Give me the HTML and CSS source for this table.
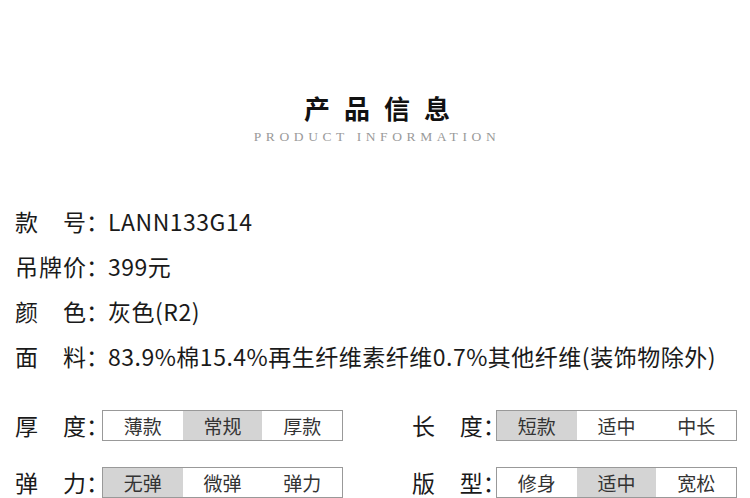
FILE: index.html
```html
<!DOCTYPE html>
<html lang="zh-CN">
<head>
  <meta charset="UTF-8">
  <title>产品信息</title>
  <link rel="stylesheet" href="styles.css">
</head>
<body>
  <div class="page">
    <div class="head">
      <h1>产品信息</h1>
      <p class="sub">PRODUCT INFORMATION</p>
    </div>

    <div class="info">
      <div class="row"><span class="label">款号</span><span class="colon">：</span>LANN133G14</div>
      <div class="row"><span class="label">吊牌价</span><span class="colon">：</span>399元</div>
      <div class="row"><span class="label">颜色</span><span class="colon">：</span>灰色(R2)</div>
      <div class="row"><span class="label">面料</span><span class="colon">：</span>83.9%棉15.4%再生纤维素纤维0.7%其他纤维(装饰物除外)</div>
    </div>

    <div class="opts">
      <div class="opt">
        <span class="label">厚度</span><span class="colon">：</span>
        <div class="choices"><span>薄款</span><span class="on">常规</span><span>厚款</span></div>
      </div>
      <div class="opt">
        <span class="label">长度</span><span class="colon">：</span>
        <div class="choices"><span class="on">短款</span><span>适中</span><span>中长</span></div>
      </div>
      <div class="opt">
        <span class="label">弹力</span><span class="colon">：</span>
        <div class="choices"><span class="on">无弹</span><span>微弹</span><span>弹力</span></div>
      </div>
      <div class="opt">
        <span class="label">版型</span><span class="colon">：</span>
        <div class="choices"><span>修身</span><span class="on">适中</span><span>宽松</span></div>
      </div>
    </div>
  </div>
</body>
</html>
```

FILE: styles.css
```css
body {
  margin: 0;
  background: #fff;
  color: #1a1a1a;
  font-family: "Noto Sans CJK SC", "Noto Sans", sans-serif;
}

.page {
  padding: 0 13px 0 15px;
}

.head {
  text-align: center;
  padding-top: 89px;
}

h1 {
  margin: 0;
  font-size: 26px;
  font-weight: bold;
  line-height: 38px;
  letter-spacing: 14px;
  padding-left: 16px;
  color: #111;
}

.sub {
  margin: 2px 0 0;
  font-family: "Liberation Serif", serif;
  font-size: 13.5px;
  letter-spacing: 4.6px;
  color: #9a9a9a;
  padding-left: 2px;
}

.info {
  margin-top: 53px;
  font-size: 23px;
  letter-spacing: 0.5px;
}

.row {
  display: flex;
  align-items: center;
  height: 45px;
}

.label {
  display: inline-block;
  width: 71px;
  text-align: justify;
  text-align-last: justify;
  letter-spacing: 0;
}

.colon {
  display: inline-block;
  width: 22px;
  letter-spacing: 0;
}

.opts {
  margin-top: 30px;
  display: grid;
  grid-template-columns: 328px 325px;
  column-gap: 69px;
  row-gap: 23px;
  font-size: 23px;
}

.opt {
  display: flex;
  align-items: center;
}

.choices {
  display: flex;
  margin-left: -6px;
  width: 239px;
  height: 29px;
  border: 1px solid #999;
}

.opt:nth-child(even) .choices {
  margin-left: -9px;
  width: 240px;
}

.choices span {
  flex: 1;
  text-align: center;
  font-size: 19px;
  line-height: 29px;
  color: #333;
}

.choices .on {
  background: #d4d4d4;
}
```
